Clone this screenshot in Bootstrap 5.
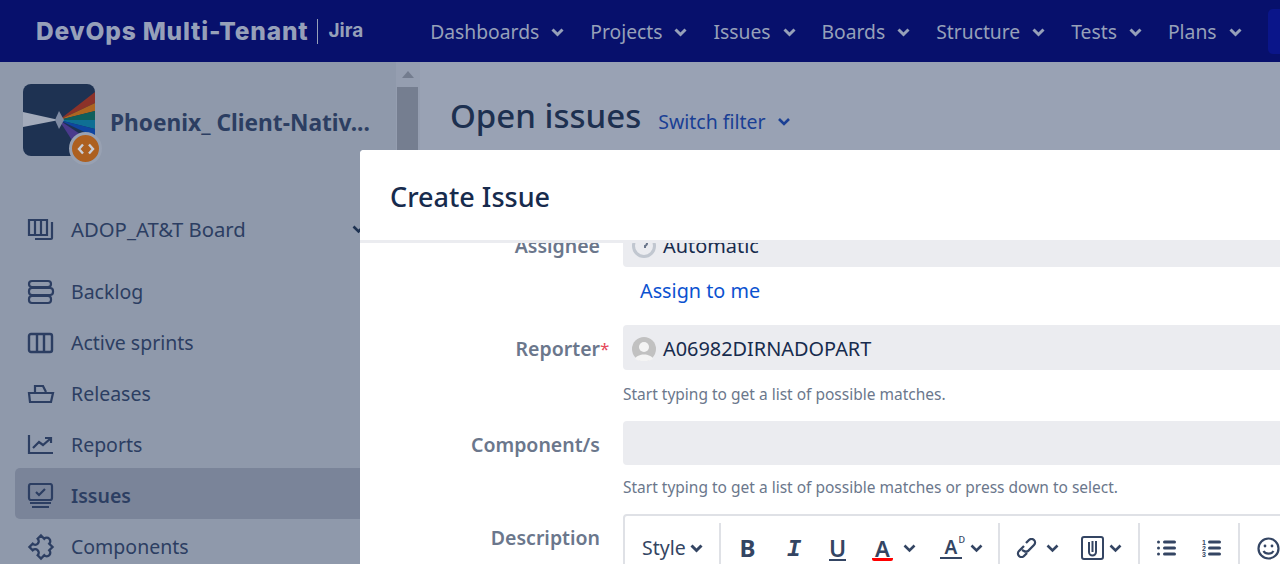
<!DOCTYPE html>
<html lang="en">
<head>
  <meta charset="UTF-8" />
  <title>Open issues</title>
  <link href="https://cdn.jsdelivr.net/npm/bootstrap@5.3.0/dist/css/bootstrap.min.css" rel="stylesheet" />
  <style>
    html, body { height: 564px; overflow: hidden; }
    body { font-family: "Noto Sans", sans-serif; background: #99a2b4; color: #172b4d; position: relative; }

    .top-bar { height: 62px; background: #07106c; padding-left: 36px; white-space: nowrap; }
    .top-bar > * { flex-shrink: 0; }
    .top-bar svg { flex-shrink: 0; }
    .brand-name { font-family: Inter, sans-serif; font-weight: 800; font-size: 24.5px; color: #96a0b9; letter-spacing: 0.8px; }
    .brand-sep { width: 1px; height: 25px; background: #96a0b9; margin: 0 10px 0 9px; }
    .brand-app { font-family: Inter, sans-serif; font-weight: 700; font-size: 19px; color: #96a0b9; }
    .top-menu { margin-left: 67px; gap: 26px; padding-top: 2px; }
    .top-item { color: #96a0b9; font-size: 19.3px; gap: 12px; }
    .top-create { width: 40px; height: 45px; background: #0a158a; border-radius: 5px 0 0 5px; margin-left: 26px; }

    .page-wrap { height: 502px; }
    .side-nav { width: 420px; background: #8f99ab; color: #2c3e62; position: relative; flex-shrink: 0; }
    .side-scroll { position: absolute; top: 0; right: 0; width: 24px; height: 100%; background: #959eb0; }
    .side-scroll .scroll-up { width: 0; height: 0; border: 6px solid transparent; border-top: 0; border-bottom: 7px solid #737c8e; margin: 9px auto 9px; }
    .side-scroll .scroll-thumb { width: 21px; height: 300px; background: #757e90; margin-left: 1px; }

    .proj-head { padding: 22px 0 0 23px; height: 142px; gap: 15px; }
    .proj-logo { width: 72px; height: 72px; position: relative; flex-shrink: 0; }
    .proj-type { position: absolute; left: 46px; top: 48px; width: 33px; height: 33px; border-radius: 50%; background: #ad6020; border: 3px solid #98a1b2; }
    .proj-name { font-size: 22.7px; font-weight: 700; color: #2c3e62; padding-top: 22px; white-space: nowrap; }

    .board-row { height: 51px; padding-left: 27px; font-size: 20.3px; margin-bottom: 9px; }
    .board-caret { margin-left: auto; margin-right: 55px; }
    .nav-entry { height: 51px; margin-left: 15px; padding: 5px 0 0 12px; font-size: 19.5px; border-radius: 5px 0 0 5px; }
    .nav-entry.is-current { background: #7a8499; font-weight: 600; }
    .nav-glyph { width: 28px; margin-right: 16px; flex-shrink: 0; }

    .page-head { padding: 32px 0 0 30px; gap: 17px; }
    .page-title { font-size: 33px; font-weight: 500; color: #1d3050; margin: 0; line-height: 44px; }
    .switch-link { color: #1a3f94; font-size: 19.5px; gap: 12px; padding-top: 13px; }

    .issue-dialog { position: absolute; left: 360px; top: 150px; width: 1000px; height: 500px; background: #fff; border-radius: 4px 0 0 0; overflow: hidden; }
    .dialog-head { height: 93px; padding: 4px 30px 0; border-bottom: 3px solid #ebecf0; position: relative; z-index: 1; background: #fff; }
    .dialog-head h2 { font-size: 27px; font-weight: 500; margin: 0; color: #172b4d; }
    .dialog-form { margin-top: -21px; }
    .form-line { display: flex; }
    .form-line.gap-reporter { margin-top: 21px; }
    .form-line.gap-component { margin-top: 16px; }
    .form-line.gap-description { margin-top: 16px; }
    .form-label { width: 240px; text-align: right; font-size: 19.5px; font-weight: 600; color: #6b778c; flex-shrink: 0; line-height: 48px; }
    .form-label .req { color: #e5495a; font-weight: 400; font-size: 17px; position: absolute; }
    .form-cell { margin-left: 23px; width: 720px; }
    .fake-input { height: 45px; background: #ebecf0; border-radius: 4px; font-size: 19.9px; color: #172b4d; padding: 2px 0 0 9px; gap: 7px; }
    .fake-input.is-empty { height: 44px; margin-bottom: -2px; }
    .hint-text { font-size: 15.5px; color: #6b778c; line-height: 22px; margin-top: 13px; }
    .assign-link { font-size: 19.8px; color: #0b52d0; display: block; margin: 10px 0 0 17px; text-decoration: none; line-height: 27px; }

    .editor-box { border: 2px solid #dfe1e6; border-radius: 4px; height: 80px; padding: 7px 0 0 17px; width: 680px; }
    .tool-group { height: 50px; border-right: 2px solid #dfe1e6; flex-shrink: 0; color: #344563; }
    .tool-style { width: 79px; }
    .tool-format { padding: 0 15px 0 4px; }
    .tool-insert { padding: 0 16px 0 15px; }
    .tool-lists { padding: 0 17px; }
    .tool-emoji { padding-left: 17px; height: 50px; }
    .style-text { font-size: 19.5px; color: #344563; }
    .tool-btn { width: 45px; text-align: center; font-size: 24px; line-height: 26px; font-weight: 700; }
    .tool-btn.glyph-i { font-family: "Liberation Mono", monospace; font-style: italic; padding: 3px 0 0 3px; }
    .tool-btn.glyph-u span { border-bottom: 2.5px solid #344563; display: inline-block; line-height: 21px; font-weight: 600; font-size: 23px; }
    .tool-btn.glyph-a span { border-bottom: 3px solid #f00; display: inline-block; line-height: 20px; padding: 0 3px; font-weight: 600; font-size: 22px; border-radius: 2px; }
    .tool-more { position: relative; width: 22px; margin-left: 24px; font-size: 19px; font-weight: 600; line-height: 20px; border-bottom: 2px solid #344563; text-align: center; }
    .tool-more sup { position: absolute; top: 3px; right: -3px; font-size: 9px; font-weight: 500; }
    .caret-tight { margin-left: -2px; }
    .caret-after { margin-left: 5px; }
    .tool-next { margin-left: 22px; }
    .list-next { margin-left: 26px; }
  </style>
</head>
<body>

  <nav class="top-bar d-flex align-items-center">
    <span class="brand-name">DevOps Multi-Tenant</span>
    <span class="brand-sep"></span>
    <span class="brand-app">Jira</span>
    <div class="top-menu d-flex align-items-center">
      <span class="top-item d-flex align-items-center">Dashboards <svg width="13" height="9" viewBox="0 0 13 9"><path d="M1.5 1.5l5 5 5-5" fill="none" stroke="#96a0b9" stroke-width="3"/></svg></span>
      <span class="top-item d-flex align-items-center">Projects <svg width="13" height="9" viewBox="0 0 13 9"><path d="M1.5 1.5l5 5 5-5" fill="none" stroke="#96a0b9" stroke-width="3"/></svg></span>
      <span class="top-item d-flex align-items-center">Issues <svg width="13" height="9" viewBox="0 0 13 9"><path d="M1.5 1.5l5 5 5-5" fill="none" stroke="#96a0b9" stroke-width="3"/></svg></span>
      <span class="top-item d-flex align-items-center">Boards <svg width="13" height="9" viewBox="0 0 13 9"><path d="M1.5 1.5l5 5 5-5" fill="none" stroke="#96a0b9" stroke-width="3"/></svg></span>
      <span class="top-item d-flex align-items-center">Structure <svg width="13" height="9" viewBox="0 0 13 9"><path d="M1.5 1.5l5 5 5-5" fill="none" stroke="#96a0b9" stroke-width="3"/></svg></span>
      <span class="top-item d-flex align-items-center">Tests <svg width="13" height="9" viewBox="0 0 13 9"><path d="M1.5 1.5l5 5 5-5" fill="none" stroke="#96a0b9" stroke-width="3"/></svg></span>
      <span class="top-item d-flex align-items-center">Plans <svg width="13" height="9" viewBox="0 0 13 9"><path d="M1.5 1.5l5 5 5-5" fill="none" stroke="#96a0b9" stroke-width="3"/></svg></span>
    </div>
    <span class="top-create"></span>
  </nav>

  <div class="page-wrap d-flex">
    <aside class="side-nav">
      <div class="side-scroll">
        <div class="scroll-up"></div>
        <div class="scroll-thumb"></div>
      </div>
      <div class="proj-head d-flex align-items-start">
        <div class="proj-logo">
          <svg width="72" height="72" viewBox="0 0 72 72">
            <rect width="72" height="72" rx="8" fill="#1e3252"/>
            <path d="M36 36L72 8v11z" fill="#8c3229"/>
            <path d="M36 36L72 19v8z" fill="#ad6520"/>
            <path d="M36 36L72 27v9z" fill="#0f5f5c"/>
            <path d="M36 36L72 36v9z" fill="#0f6f94"/>
            <path d="M36 36L72 45v8z" fill="#0f45a0"/>
            <path d="M36 36L66 56l-14 5z" fill="#4a3a8c"/>
            <path d="M0 28l36 8-36 7z" fill="#a3abbb"/>
            <path d="M36 27l5 9-5 9-4-9z" fill="#7f8ba3"/>
          </svg>
          <span class="proj-type d-flex align-items-center justify-content-center">
            <svg width="18" height="12" viewBox="0 0 18 12"><path d="M6 1.5L2 6l4 4.5M12 1.5L16 6l-4 4.5" fill="none" stroke="#c9ced8" stroke-width="2.4"/></svg>
          </span>
        </div>
        <div class="proj-name">Phoenix_ Client-Nativ...</div>
      </div>

      <div class="board-row d-flex align-items-center">
        <svg class="nav-glyph" height="24" viewBox="0 0 28 24" fill="none" stroke="#2c3e62" stroke-width="2.2"><path d="M2 2h18v15H2zM8 2v15M14 2v15M25 4v16a1 1 0 0 1-1 1H8"/></svg>
        ADOP_AT&amp;T Board
        <svg class="board-caret" width="13" height="9" viewBox="0 0 13 9"><path d="M1.5 1.5l5 5 5-5" fill="none" stroke="#1e3252" stroke-width="2.6"/></svg>
      </div>

      <div class="nav-entry d-flex align-items-center">
        <svg class="nav-glyph" height="26" viewBox="0 0 28 26" fill="none" stroke="#2c3e62" stroke-width="2.2"><rect x="2" y="2" width="22" height="6" rx="3"/><rect x="2" y="9" width="24" height="7" rx="3"/><rect x="2" y="17" width="22" height="7" rx="3"/></svg>
        Backlog
      </div>
      <div class="nav-entry d-flex align-items-center">
        <svg class="nav-glyph" height="22" viewBox="0 0 28 22" fill="none" stroke="#2c3e62" stroke-width="2.4"><rect x="2" y="2" width="23" height="18" rx="2"/><path d="M10 2v18M17 2v18"/></svg>
        Active sprints
      </div>
      <div class="nav-entry d-flex align-items-center">
        <svg class="nav-glyph" height="22" viewBox="0 0 28 22" fill="none" stroke="#2c3e62" stroke-width="2.2"><path d="M8 9V3h8l3 6M2 10h24l-2 9H3z"/></svg>
        Releases
      </div>
      <div class="nav-entry d-flex align-items-center">
        <svg class="nav-glyph" height="22" viewBox="0 0 28 22" fill="none" stroke="#2c3e62" stroke-width="2.2"><path d="M2 1v18h24M6 14l6-6 4 3 7-6M18 4h6v5"/></svg>
        Reports
      </div>
      <div class="nav-entry is-current d-flex align-items-center">
        <svg class="nav-glyph" height="26" viewBox="0 0 28 26" fill="none" stroke="#2c3e62" stroke-width="2.2"><rect x="2" y="1" width="23" height="16" rx="2"/><path d="M9 9l3 3 6-6M3 20h21M5 24h17"/></svg>
        Issues
      </div>
      <div class="nav-entry d-flex align-items-center">
        <svg class="nav-glyph" height="28" viewBox="2 2 24 24" fill="none" stroke="#2c3e62" stroke-width="2"><path transform="rotate(45 14 14)" d="M7 7h4a3 3 0 1 1 6 0h4v4a3 3 0 1 1 0 6v4h-4a3 3 0 1 0-6 0H7v-4a3 3 0 1 0 0-6z"/></svg>
        Components
      </div>
    </aside>

    <main class="page-head d-flex align-items-start">
      <h1 class="page-title">Open issues</h1>
      <span class="switch-link d-flex align-items-center">Switch filter <svg width="12" height="8" viewBox="0 0 12 8"><path d="M1 1l5 5 5-5" fill="none" stroke="#1a3f94" stroke-width="2.6"/></svg></span>
    </main>
  </div>

  <section class="issue-dialog">
    <header class="dialog-head d-flex align-items-center">
      <h2>Create Issue</h2>
    </header>
    <div class="dialog-form">
      <div class="form-line">
        <div class="form-label">Assignee</div>
        <div class="form-cell">
          <div class="fake-input d-flex align-items-center">
            <svg width="24" height="24" viewBox="0 0 24 24"><circle cx="12" cy="12" r="10.5" fill="none" stroke="#c1c7d0" stroke-width="3"/><path d="M9 9a3 3 0 1 1 4 3v2" fill="none" stroke="#6b778c" stroke-width="2"/></svg>
            Automatic
          </div>
          <a class="assign-link" href="#">Assign to me</a>
        </div>
      </div>
      <div class="form-line gap-reporter">
        <div class="form-label">Reporter<span class="req">*</span></div>
        <div class="form-cell">
          <div class="fake-input d-flex align-items-center">
            <svg width="24" height="24" viewBox="0 0 24 24"><circle cx="12" cy="12" r="12" fill="#c1c1c1"/><circle cx="12" cy="10" r="5" fill="#f4f4f4"/><path d="M3 22c2-6 16-6 18 0-5 3-13 3-18 0z" fill="#f4f4f4"/></svg>
            A06982DIRNADOPART
          </div>
          <div class="hint-text">Start typing to get a list of possible matches.</div>
        </div>
      </div>
      <div class="form-line gap-component">
        <div class="form-label">Component/s</div>
        <div class="form-cell">
          <div class="fake-input is-empty"></div>
          <div class="hint-text">Start typing to get a list of possible matches or press down to select.</div>
        </div>
      </div>
      <div class="form-line gap-description">
        <div class="form-label">Description</div>
        <div class="form-cell">
          <div class="editor-box d-flex align-items-start">
            <div class="tool-group tool-style d-flex align-items-center">
              <span class="style-text">Style</span>
              <svg class="ms-1" width="13" height="9" viewBox="0 0 13 9"><path d="M1.5 1.5l5 5 5-5" fill="none" stroke="#344563" stroke-width="3"/></svg>
            </div>
            <div class="tool-group tool-format d-flex align-items-center">
              <span class="tool-btn">B</span>
              <span class="tool-btn glyph-i">I</span>
              <span class="tool-btn glyph-u"><span>U</span></span>
              <span class="tool-btn glyph-a"><span>A</span></span>
              <svg class="caret-tight" width="13" height="9" viewBox="0 0 13 9"><path d="M1.5 1.5l5 5 5-5" fill="none" stroke="#344563" stroke-width="2.6"/></svg>
              <span class="tool-more">A<sup>D</sup></span>
              <svg class="ms-2" width="13" height="9" viewBox="0 0 13 9"><path d="M1.5 1.5l5 5 5-5" fill="none" stroke="#344563" stroke-width="2.6"/></svg>
            </div>
            <div class="tool-group tool-insert d-flex align-items-center">
              <svg width="23" height="20" viewBox="0 0 23 20" fill="none" stroke="#344563" stroke-width="2.3"><path d="M9 8l-5 5a3.5 3.5 0 0 0 5 5l3-3"/><path d="M7 12l2 1a3.5 3.5 0 0 0 4 0l6-6a3.5 3.5 0 0 0-5-5l-3 3"/></svg>
              <svg class="ms-2" width="13" height="9" viewBox="0 0 13 9"><path d="M1.5 1.5l5 5 5-5" fill="none" stroke="#344563" stroke-width="2.6"/></svg>
              <svg class="tool-next" width="23" height="24" viewBox="0 0 23 24" fill="none" stroke="#344563" stroke-width="2"><rect x="1" y="1" width="21" height="22" rx="2"/><path d="M8 6v10a3.5 3.5 0 0 0 7 0V5M11.500 5v11"/></svg>
              <svg class="caret-after" width="13" height="9" viewBox="0 0 13 9"><path d="M1.5 1.5l5 5 5-5" fill="none" stroke="#344563" stroke-width="2.6"/></svg>
            </div>
            <div class="tool-group tool-lists d-flex align-items-center">
              <svg width="19" height="16" viewBox="0 0 19 16" fill="#344563"><circle cx="1.500" cy="2" r="1.500"/><circle cx="1.500" cy="8" r="1.500"/><circle cx="1.500" cy="14" r="1.500"/><rect x="6" y="0.500" width="13" height="3" rx="1.500"/><rect x="6" y="6.500" width="13" height="3" rx="1.500"/><rect x="6" y="12.500" width="13" height="3" rx="1.500"/></svg>
              <svg class="list-next" width="19" height="18" viewBox="0 0 19 18" fill="#344563"><text x="0" y="6" font-size="7" font-weight="700" font-family="Liberation Sans">1</text><text x="0" y="12" font-size="7" font-weight="700" font-family="Liberation Sans">2</text><text x="0" y="18" font-size="7" font-weight="700" font-family="Liberation Sans">3</text><rect x="6" y="1.500" width="13" height="3" rx="1.500"/><rect x="6" y="7.500" width="13" height="3" rx="1.500"/><rect x="6" y="13.500" width="13" height="3" rx="1.500"/></svg>
            </div>
            <div class="tool-emoji d-flex align-items-center">
              <svg width="23" height="23" viewBox="0 0 23 23" fill="none" stroke="#344563" stroke-width="2.2"><circle cx="11.500" cy="11.500" r="10"/><circle cx="8" cy="9" r="1.400" fill="#344563" stroke="none"/><circle cx="15" cy="9" r="1.400" fill="#344563" stroke="none"/><path d="M6.500 14c2 3.500 8 3.500 10 0"/></svg>
            </div>
          </div>
        </div>
      </div>
    </div>
  </section>

  <script src="https://cdn.jsdelivr.net/npm/bootstrap@5.3.0/dist/js/bootstrap.bundle.min.js"></script>
</body>
</html>
